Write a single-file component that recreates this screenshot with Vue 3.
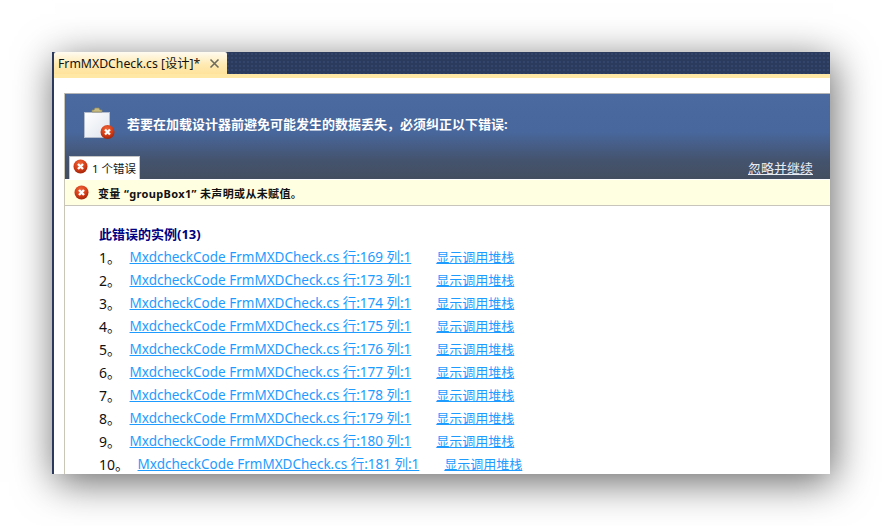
<script setup>
const rows = [169, 173, 174, 175, 176, 177, 178, 179, 180, 181].map((line, i) => ({ n: i + 1, line }))
</script>

<template>
  <div class="page">
    <div class="window">
      <div class="tabbar">
        <div class="tab">
          <span class="tabtitle">FrmMXDCheck.cs [设计]*</span>
          <svg class="close" width="11" height="11" viewBox="0 0 11 11"><path d="M1.5 1.5l8 8M9.5 1.5l-8 8" stroke="#6d6a5e" stroke-width="1.6" fill="none"/></svg>
        </div>
      </div>
      <div class="tabline"></div>
      <div class="body">
        <div class="panel">
          <div class="head">
            <div class="headtop">
              <div class="clip">
                <svg width="34" height="34" viewBox="0 0 34 34">
                  <defs>
                    <linearGradient id="pg" x1="0" y1="0" x2="1" y2="1"><stop offset="0" stop-color="#ffffff"/><stop offset="1" stop-color="#dfe4ee"/></linearGradient>
                    <radialGradient id="e1" cx="0.45" cy="0.3" r="0.75"><stop offset="0" stop-color="#f2683c"/><stop offset="0.6" stop-color="#d03a14"/><stop offset="1" stop-color="#96200a"/></radialGradient>
                  </defs>
                  <rect x="1.5" y="6.5" width="25" height="25" fill="url(#pg)" stroke="#b5bdcc"/>
                  <path d="M9 6V4h2l1-2h4l1 2h2v2z" fill="#c8bc82" stroke="#8f8658" stroke-width=".7"/>
                  <circle cx="24.5" cy="26" r="7" fill="url(#e1)"/>
                  <path d="M22 23.5l5 5M27 23.5l-5 5" stroke="#fff" stroke-width="2.2"/>
                </svg>
              </div>
              <div class="headtext">若要在加载设计器前避免可能发生的数据丢失，必须纠正以下错误:</div>
            </div>
            <div class="headbottom">
              <div class="errtab">
                <svg class="err" width="15" height="15" viewBox="0 0 15 15"><circle cx="7.5" cy="7.5" r="7" fill="url(#e1)"/><path d="M5 5l5 5M10 5l-5 5" stroke="#fff" stroke-width="2.4"/></svg>
                <span>1 个错误</span>
              </div>
              <a class="ignore">忽略并继续</a>
            </div>
          </div>
          <div class="msg">
            <svg class="err msgicon" width="15" height="15" viewBox="0 0 15 15"><circle cx="7.5" cy="7.5" r="7" fill="url(#e1)"/><path d="M5 5l5 5M10 5l-5 5" stroke="#fff" stroke-width="2.4"/></svg>
            <span class="msgtext">变量 “groupBox1” 未声明或从未赋值。</span>
          </div>
          <div class="list">
            <div class="listtitle">此错误的实例(13)</div>
            <div v-for="r in rows" :key="r.n" class="row">
              <span class="num">{{ r.n }}。</span>
              <a class="lnk first">MxdcheckCode FrmMXDCheck.cs 行:{{ r.line }} 列:1</a>
              <a class="lnk">显示调用堆栈</a>
            </div>
          </div>
        </div>
      </div>
    </div>
  </div>
</template>

<style>
html, body { margin: 0; background: #fff; }
</style>

<style scoped>
.page {
  width: 882px;
  height: 526px;
  box-sizing: border-box;
  padding: 52px;
  background: #fff;
  overflow: hidden;
  font-family: "Noto Sans", "Noto Sans CJK SC", sans-serif;
}
.window {
  width: 778px;
  height: 422px;
  box-sizing: border-box;
  border-left: 2px solid #2b3a5c;
  background: #fff;
  overflow: hidden;
  box-shadow: 3px 8px 38px 0 rgba(0, 0, 0, 0.6);
}
.tabbar {
  height: 22px;
  display: flex;
  background-color: #2b3b5e;
  background-image: radial-gradient(#33456b 1px, transparent 1px);
  background-size: 4px 4px;
}
.tab {
  width: 173px;
  height: 22px;
  display: flex;
  align-items: center;
  box-sizing: border-box;
  padding-left: 4px;
  background: linear-gradient(#fffbf0, #ffe9b0 60%, #ffe39c);
  border-radius: 2px 2px 0 0;
}
.tabtitle {
  font-size: 12.25px;
  color: #111;
  white-space: nowrap;
}
.close { margin-left: 9px; flex: none; }
.tabline { height: 4px; background: #ffe8a6; }
.body { padding: 15px 0 0 10px; }
.panel {
  border-left: 1px solid #c9c6b8;
  border-top: 1px solid #b5b5b5;
}
.head {
  height: 85px;
  display: flex;
  flex-direction: column;
  justify-content: space-between;
  background: linear-gradient(#4a6aa0 0%, #48679c 45%, #44536e 78%, #434e60 100%);
}
.headtop { display: flex; align-items: center; padding: 12px 0 0 18px; }
.clip { width: 44px; height: 36px; flex: none; }
.headtext { font-size: 13px; font-weight: 700; color: #fff; margin-top: -1px; }
.headbottom { display: flex; justify-content: space-between; align-items: flex-end; padding: 0 17px 0 4px; }
.errtab {
  height: 23px;
  width: 71px;
  box-sizing: border-box;
  display: flex;
  align-items: center;
  gap: 4px;
  padding-left: 3px;
  background: #fff;
  border: 1px solid #c5c5c5;
  border-bottom: 0;
  font-size: 11.5px;
  color: #111;
  white-space: nowrap;
}
.err { margin-top: -3px; }
.msgicon { margin-top: -1px; }
.ignore { font-size: 13px; color: #e8ecf2; text-decoration: underline; line-height: 19px; margin-bottom: 1px; }
.msg {
  height: 25px;
  display: flex;
  align-items: center;
  gap: 9px;
  padding-left: 9px;
  background: #ffffe1;
  border-top: 1px solid #fff;
  border-bottom: 1px solid #c8c6bc;
}
.msgtext { font-size: 11px; font-weight: 700; color: #111; letter-spacing: 0.35px; }
.list { padding: 19px 0 0 34px; }
.listtitle { font-size: 13px; font-weight: 700; color: #000080; line-height: 18px; margin-bottom: 3px; }
.row { height: 23px; line-height: 23px; display: flex; font-size: 13px; white-space: nowrap; }
.num { color: #111; font-size: 14px; margin-right: 8.5px; }
.lnk { color: #1e9bff; text-decoration: underline; }
.first { margin-right: 25px; font-size: 13.5px; }
</style>
